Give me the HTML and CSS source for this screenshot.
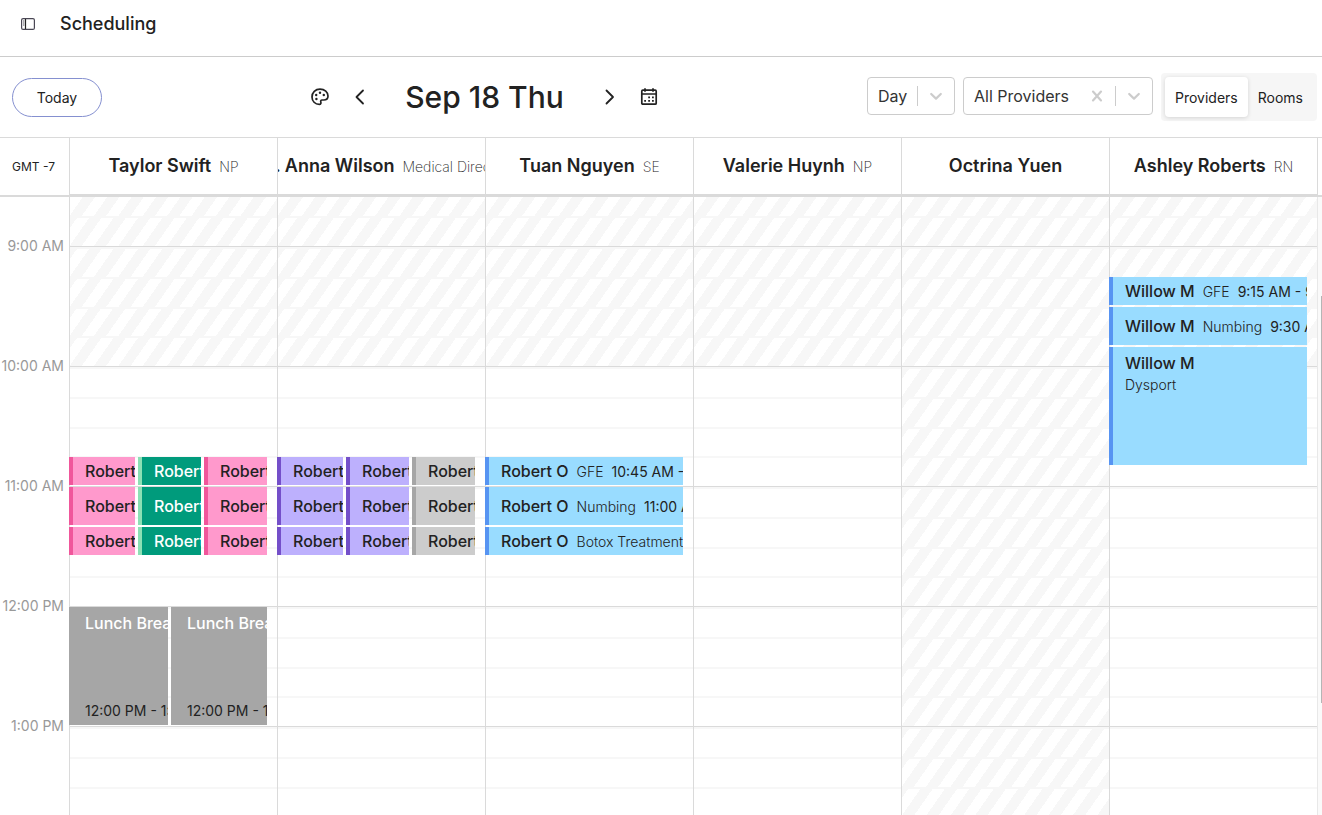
FILE: index.html
```html
<!DOCTYPE html>
<html lang="en">
  <head>
    <meta charset="UTF-8" />
    <title>Scheduling</title>
    <link rel="stylesheet" href="styles.css">
  </head>
  <body>
    <header class="page-header">
      <button class="icon-button" aria-label="Toggle sidebar">
        <svg width="14" height="12" viewBox="0 0 14 12" fill="none" stroke="#4a4754">
          <rect x="0.6" y="0.6" width="12.8" height="10.8" rx="1.5" stroke-width="1.2" />
          <path d="M4.5 1v10" stroke="#222" stroke-width="1.2" />
          <path d="M2 3h1.4M2 5h1.4M2 7h1.4" stroke-width="0.9" />
        </svg>
      </button>
      <h1>Scheduling</h1>
    </header>

    <div class="toolbar">
      <button class="today-button">Today</button>

      <div class="date-nav">
        <button class="icon-button" aria-label="Colors">
          <svg width="20" height="20" viewBox="0 0 20 20" fill="none" stroke="#222" stroke-width="1.7">
            <path d="M10 2.100c4.700 0 8 3.100 8 6.900 0 2.700-1.900 4-4.300 4h-1.700c-1.100 0-1.600.9-1.200 1.900.4 1.200 0 2.500-1.500 2.500C5.100 17.400 2 14.200 2 9.900 2 5.400 5.400 2.100 10 2.100z" />
            <g fill="#222" stroke="none">
              <circle cx="6.200" cy="8" r="1.200" />
              <circle cx="10" cy="5.800" r="1.200" />
              <circle cx="13.800" cy="8" r="1.200" />
              <circle cx="6.400" cy="12" r="1.200" />
            </g>
          </svg>
        </button>
        <button class="icon-button" aria-label="Previous day">
          <svg width="20" height="20" viewBox="0 0 20 20" fill="none" stroke="#222" stroke-width="1.8" stroke-linecap="round" stroke-linejoin="round">
            <path d="M13 3.500L6.500 10l6.500 6.500" />
          </svg>
        </button>
        <h2>Sep 18 Thu</h2>
        <button class="icon-button" aria-label="Next day">
          <svg width="20" height="20" viewBox="0 0 20 20" fill="none" stroke="#222" stroke-width="1.8" stroke-linecap="round" stroke-linejoin="round">
            <path d="M7.500 3.500L14 10l-6.500 6.500" />
          </svg>
        </button>
        <button class="icon-button" aria-label="Pick a date">
          <svg width="20" height="20" viewBox="0 0 20 20" fill="none" stroke="#222" stroke-width="1.700">
            <rect x="2.800" y="3.200" width="14.400" height="14" rx="1" />
            <path d="M2.800 7h14.400M6 1.200v3.600M14 1.200v3.600" />
            <path d="M9.200 10.300h1.800M13 10.300h1.800M5.200 13.800h1.800M9.200 13.800h1.800M13 13.800h1.800" stroke-width="1.800" />
          </svg>
        </button>
      </div>

      <div class="filters">
        <div class="select-box">
          <select class="select-day" aria-label="View">
            <option>Day</option>
          </select>
          <span class="select-divider"></span>
          <svg class="chevron" width="20" height="20" viewBox="0 0 20 20" fill="none" stroke="#ccc" stroke-width="2.200" stroke-linecap="round" stroke-linejoin="round">
            <path d="M5.200 8l4.800 4.600L14.800 8" />
          </svg>
        </div>
        <div class="select-box">
          <select class="select-providers" aria-label="Providers">
            <option>All Providers</option>
          </select>
          <button class="icon-button" aria-label="Clear providers">
            <svg width="20" height="20" viewBox="0 0 20 20" fill="none" stroke="#ccc" stroke-width="2.200" stroke-linecap="round">
              <path d="M6 5.600l8 8.800M14 5.600l-8 8.800" />
            </svg>
          </button>
          <span class="select-divider"></span>
          <svg class="chevron" width="20" height="20" viewBox="0 0 20 20" fill="none" stroke="#ccc" stroke-width="2.200" stroke-linecap="round" stroke-linejoin="round">
            <path d="M5.200 8l4.800 4.600L14.800 8" />
          </svg>
        </div>
        <div class="segmented">
          <button class="active">Providers</button>
          <button>Rooms</button>
        </div>
      </div>
    </div>

    <div class="calendar-head">
      <div class="timezone">GMT -7</div>
      <div class="resource"><strong>Taylor Swift</strong><span>NP</span></div>
      <div class="resource"><strong>Dr. Anna Wilson</strong><span>Medical Director</span></div>
      <div class="resource"><strong>Tuan Nguyen</strong><span>SE</span></div>
      <div class="resource"><strong>Valerie Huynh</strong><span>NP</span></div>
      <div class="resource"><strong>Octrina Yuen</strong></div>
      <div class="resource"><strong>Ashley Roberts</strong><span>RN</span></div>
      <div class="head-end"></div>
    </div>

    <main class="calendar-body">
      <div class="hours">
        <span>9:00 AM</span>
        <span>10:00 AM</span>
        <span>11:00 AM</span>
        <span>12:00 PM</span>
        <span>1:00 PM</span>
      </div>

      <section class="column" aria-label="Taylor Swift">
        <div class="hour first closed"><i></i><i></i></div>
        <div class="hour closed"><i></i><i></i><i></i><i></i></div>
        <div class="hour"><i></i><i></i><i></i><i></i></div>
        <div class="hour"><i></i><i></i><i></i><i></i></div>
        <div class="hour"><i></i><i></i><i></i><i></i></div>
        <div class="hour"><i></i><i></i><i></i><i></i></div>
        <div class="events">
          <div class="event pink lane-1 at-1045"><b>Robert O</b></div>
          <div class="event green lane-2 at-1045"><b>Robert O</b></div>
          <div class="event pink lane-3 at-1045"><b>Robert O</b></div>
          <div class="event pink lane-1 at-1100"><b>Robert O</b></div>
          <div class="event green lane-2 at-1100"><b>Robert O</b></div>
          <div class="event pink lane-3 at-1100"><b>Robert O</b></div>
          <div class="event pink lane-1 at-1120"><b>Robert O</b></div>
          <div class="event green lane-2 at-1120"><b>Robert O</b></div>
          <div class="event pink lane-3 at-1120"><b>Robert O</b></div>
          <div class="event break tall half-1 at-1200"><b>Lunch Break</b><time>12:00 PM - 1:00 PM</time></div>
          <div class="event break tall half-2 at-1200"><b>Lunch Break</b><time>12:00 PM - 1:00 PM</time></div>
        </div>
      </section>

      <section class="column" aria-label="Dr. Anna Wilson">
        <div class="hour first closed"><i></i><i></i></div>
        <div class="hour closed"><i></i><i></i><i></i><i></i></div>
        <div class="hour"><i></i><i></i><i></i><i></i></div>
        <div class="hour"><i></i><i></i><i></i><i></i></div>
        <div class="hour"><i></i><i></i><i></i><i></i></div>
        <div class="hour"><i></i><i></i><i></i><i></i></div>
        <div class="events">
          <div class="event purple lane-1 at-1045"><b>Robert O</b></div>
          <div class="event purple lane-2 at-1045"><b>Robert O</b></div>
          <div class="event gray lane-3 at-1045"><b>Robert O</b></div>
          <div class="event purple lane-1 at-1100"><b>Robert O</b></div>
          <div class="event purple lane-2 at-1100"><b>Robert O</b></div>
          <div class="event gray lane-3 at-1100"><b>Robert O</b></div>
          <div class="event purple lane-1 at-1120"><b>Robert O</b></div>
          <div class="event purple lane-2 at-1120"><b>Robert O</b></div>
          <div class="event gray lane-3 at-1120"><b>Robert O</b></div>
        </div>
      </section>

      <section class="column" aria-label="Tuan Nguyen">
        <div class="hour first closed"><i></i><i></i></div>
        <div class="hour closed"><i></i><i></i><i></i><i></i></div>
        <div class="hour"><i></i><i></i><i></i><i></i></div>
        <div class="hour"><i></i><i></i><i></i><i></i></div>
        <div class="hour"><i></i><i></i><i></i><i></i></div>
        <div class="hour"><i></i><i></i><i></i><i></i></div>
        <div class="events">
          <div class="event blue at-1045"><b>Robert O</b><span>GFE</span><time>10:45 AM - 11:00 AM</time></div>
          <div class="event blue at-1100"><b>Robert O</b><span>Numbing</span><time>11:00 AM - 11:20 AM</time></div>
          <div class="event blue at-1120"><b>Robert O</b><span>Botox Treatment</span></div>
        </div>
      </section>

      <section class="column" aria-label="Valerie Huynh">
        <div class="hour first closed"><i></i><i></i></div>
        <div class="hour closed"><i></i><i></i><i></i><i></i></div>
        <div class="hour"><i></i><i></i><i></i><i></i></div>
        <div class="hour"><i></i><i></i><i></i><i></i></div>
        <div class="hour"><i></i><i></i><i></i><i></i></div>
        <div class="hour"><i></i><i></i><i></i><i></i></div>
      </section>

      <section class="column" aria-label="Octrina Yuen">
        <div class="hour first closed"><i></i><i></i></div>
        <div class="hour closed"><i></i><i></i><i></i><i></i></div>
        <div class="hour closed"><i></i><i></i><i></i><i></i></div>
        <div class="hour closed"><i></i><i></i><i></i><i></i></div>
        <div class="hour closed"><i></i><i></i><i></i><i></i></div>
        <div class="hour closed"><i></i><i></i><i></i><i></i></div>
      </section>

      <section class="column" aria-label="Ashley Roberts">
        <div class="hour first closed"><i></i><i></i></div>
        <div class="hour closed"><i></i><i></i><i></i><i></i></div>
        <div class="hour"><i></i><i></i><i></i><i></i></div>
        <div class="hour"><i></i><i></i><i></i><i></i></div>
        <div class="hour"><i></i><i></i><i></i><i></i></div>
        <div class="hour"><i></i><i></i><i></i><i></i></div>
        <div class="events">
          <div class="event blue at-0915"><b>Willow M</b><span>GFE</span><time>9:15 AM - 9:30 AM</time></div>
          <div class="event blue at-0930"><b>Willow M</b><span>Numbing</span><time>9:30 AM - 9:50 AM</time></div>
          <div class="event blue tall at-0950"><b>Willow M</b><span>Dysport</span></div>
        </div>
      </section>

      <div class="scroll-track"><div class="scroll-thumb"></div></div>
    </main>
  </body>
</html>
```
FILE: styles.css
```css
* {
  box-sizing: border-box;
}
body {
  margin: 0;
  height: 100vh;
  display: flex;
  flex-direction: column;
  overflow: hidden;
  background: #fff;
  color: #222;
  font-family: Inter, "Liberation Sans", sans-serif;
  font-size: 14px;
}
h1, h2 {
  margin: 0;
  font-weight: 500;
}
button, select {
  font-family: inherit;
  font-size: 14px;
  color: inherit;
  background: none;
  border: none;
  padding: 0;
  cursor: pointer;
}
svg {
  display: block;
  flex: none;
}

/* top bar */
.page-header {
  display: flex;
  align-items: center;
  gap: 25px;
  padding: 12px 21px 20px;
  border-bottom: 1px solid #ccc;
}
.page-header h1 {
  font-size: 18px;
  line-height: 24px;
}
.toolbar {
  display: flex;
  align-items: center;
  justify-content: space-between;
  height: 80px;
  padding: 0 5px 0 12px;
}
.today-button {
  width: 90px;
  height: 39px;
  border: 1px solid #8590d0;
  border-radius: 20px;
}
.date-nav {
  display: flex;
  align-items: center;
  gap: 20px;
}
.date-nav h2 {
  margin: 0 15px;
  font-size: 30px;
  line-height: 40px;
}
.filters {
  display: flex;
  align-items: flex-start;
  gap: 8px;
}
.select-box {
  display: flex;
  align-items: center;
  height: 38px;
  margin-top: 4px;
  padding: 0 8px 0 10px;
  border: 1px solid #ccc;
  border-radius: 4px;
  color: #333;
}
.select-box select {
  appearance: none;
  height: 36px;
  font-size: 16px;
  outline: none;
}
.select-day {
  width: 39px;
}
.select-providers {
  width: 113px;
}
.select-divider {
  width: 1px;
  height: 20px;
  margin-right: 8px;
  background: #ccc;
}
.select-box .icon-button {
  margin-right: 8px;
}
.segmented {
  display: flex;
  padding: 4px;
  border-radius: 4px;
  background: #f6f6f6;
}
.segmented button {
  height: 40px;
  padding: 0 10px;
  border-radius: 4px;
}
.segmented .active {
  background: #fff;
  box-shadow: 0 1px 4px rgba(0, 0, 0, 0.14);
}

/* calendar */
.calendar-head, .calendar-body {
  display: grid;
  grid-template-columns: 69px repeat(6, minmax(0, 1fr)) 5px;
}
.calendar-head {
  height: 60px;
  border-top: 1px solid #dadada;
  border-bottom: 2px solid #dadada;
}
.timezone {
  display: flex;
  align-items: center;
  padding-left: 12px;
  font-size: 12px;
}
.resource {
  display: flex;
  align-items: baseline;
  justify-content: center;
  gap: 8px;
  overflow: hidden;
  white-space: nowrap;
  line-height: 56px;
  border-left: 1px solid #dadada;
  border-bottom: 1px solid #dadada;
}
.resource strong {
  font-size: 18px;
  font-weight: 600;
}
.resource span {
  font-weight: 200;
}
.head-end {
  border-left: 1px solid #dadada;
}
.calendar-body {
  flex: 1;
  min-height: 0;
  overflow: hidden;
}
.hours {
  display: flex;
  flex-direction: column;
  align-items: flex-end;
  gap: 100px;
  padding: 39px 5px 0 0;
  color: #999;
}
.hours span {
  line-height: 20px;
}
.column {
  position: relative;
  border-left: 1px solid #dadada;
}
.hour {
  display: grid;
  grid-template-rows: 30px 30px 29px 30px;
  border-bottom: 1px solid #dadada;
}
.hour.first {
  grid-template-rows: 19px 30px;
}
.hour i {
  border-top: 2px solid #f7f7f7;
}
.hour.first i:first-child {
  border-top: none;
}
.closed i {
  background: repeating-linear-gradient(-55deg, #f7f7f7 0 10px, #fff 10px 20px);
}

/* five minutes are one 10px row, 9:00 AM is row 1 */
.events {
  position: absolute;
  top: 50px;
  left: -1px;
  right: 10px;
  display: grid;
  grid-template-columns: repeat(6, minmax(0, 1fr));
  grid-template-rows: repeat(48, 10px);
}
.event {
  grid-column: 1 / -1;
  display: flex;
  align-items: center;
  gap: 8px;
  margin-bottom: 2px;
  padding-left: 12px;
  overflow: hidden;
  white-space: nowrap;
  border-left: 4px solid;
}
.event b {
  font-size: 16px;
  font-weight: 500;
}
.event span {
  font-weight: 300;
}
.tall {
  flex-direction: column;
  align-items: flex-start;
  gap: 0;
  padding-top: 6px;
}
.tall b {
  line-height: 20px;
}
.tall span {
  line-height: 24px;
}
.tall time {
  margin-top: auto;
  line-height: 28px;
}
.lane-1 { grid-column: 1 / span 2; }
.lane-2 { grid-column: 3 / span 2; margin-left: 3px; }
.lane-3 { grid-column: 5 / span 2; margin-left: 3px; }
.half-1 { grid-column: 1 / span 3; }
.half-2 { grid-column: 4 / span 3; margin-left: 3px; }
.at-0915 { grid-row: 4 / span 3; }
.at-0930 { grid-row: 7 / span 4; }
.at-0950 { grid-row: 11 / span 12; }
.at-1045 { grid-row: 22 / span 3; }
.at-1100 { grid-row: 25 / span 4; }
.at-1120 { grid-row: 29 / span 3; }
.at-1200 { grid-row: 37 / span 12; }
.pink { background: #ff99cc; border-color: #f0569b; }
.green { background: #009b7c; border-color: #8ce0b5; color: #fff; }
.purple { background: #bdb0fd; border-color: #744fc9; }
.gray { background: #ccc; border-color: #a6a6a6; }
.blue { background: #99dcff; border-color: #5794f2; }
.break { background: #a6a6a6; border-color: #a6a6a6; }
.break b { color: #fff; }

.scroll-track {
  display: flex;
  justify-content: flex-end;
  padding-top: 99px;
  background: #fafafa;
  border-left: 1px solid #e8e8e8;
}
.scroll-thumb {
  width: 1px;
  height: 407px;
  background: #b5b5b5;
}
```
